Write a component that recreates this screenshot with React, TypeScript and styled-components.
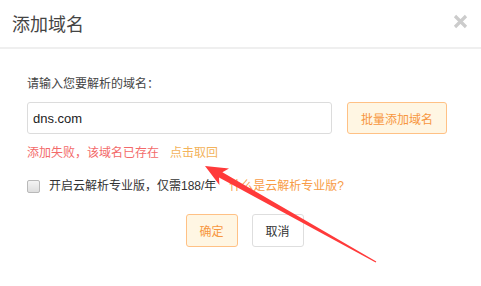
import React, { FC } from "react";
import styled, { createGlobalStyle, css } from "styled-components";

const GlobalStyle = createGlobalStyle`
  html, body {
    margin: 0;
    padding: 0;
    background: #fff;
  }
  body {
    font-family: "Liberation Sans", "Noto Sans CJK SC", sans-serif;
    color: #333;
  }
`;

const Dialog = styled.div`
  position: relative;
  width: 481px;
  height: 286px;
  background: #fff;
  overflow: hidden;
`;

const Header = styled.div`
  display: flex;
  align-items: center;
  justify-content: space-between;
  height: 49px;
  padding: 0 13px 0 12px;
  border-bottom: 2px solid #efefef;
  box-sizing: border-box;
`;

const Title = styled.div`
  font-size: 18px;
  color: #444;
  line-height: 24px;
  padding-top: 3px;
`;

const Close = styled.button`
  border: 0;
  background: none;
  padding: 0;
  width: 15px;
  height: 15px;
  display: flex;
  cursor: pointer;
  margin-top: -5px;
`;

const Body = styled.div`
  padding: 26px 27px 0 27px;
  font-size: 12px;
`;

const FieldLabel = styled.div`
  line-height: 18px;
  color: #444;
  margin-bottom: 9px;
`;

const InputRow = styled.div`
  display: flex;
  gap: 15px;
`;

const DomainInput = styled.input`
  width: 305px;
  height: 32px;
  box-sizing: border-box;
  border: 1px solid #dcdcdc;
  border-radius: 3px;
  padding: 0 5px;
  font-family: "Liberation Sans", "Noto Sans CJK SC", sans-serif;
  font-size: 13px;
  color: #222;
  outline: none;
`;

interface ButtonProps {
  readonly variant?: "primary" | "default";
}

const Button = styled.button<ButtonProps>`
  height: 33px;
  box-sizing: border-box;
  border-radius: 3px;
  font-family: "Liberation Sans", "Noto Sans CJK SC", sans-serif;
  font-size: 12px;
  cursor: pointer;
  ${(props) =>
    props.variant === "primary"
      ? css`
          background: #fff6e3;
          border: 1px solid #ffc185;
          color: #f7963f;
        `
      : css`
          background: #fff;
          border: 1px solid #dedede;
          color: #333;
        `}
`;

const BatchButton = styled(Button)`
  height: 32px;
  padding: 0 13px;
`;

const ErrorRow = styled.div`
  display: flex;
  gap: 11px;
  margin-top: 10px;
  line-height: 18px;
`;

const ErrorText = styled.span`
  color: #f36a6a;
`;

interface LinkProps {
  readonly tone?: "light" | "strong";
}

const Link = styled.a<LinkProps>`
  color: ${(props) => (props.tone === "light" ? "#f3b35c" : "#f89c47")};
  text-decoration: none;
  cursor: pointer;
`;

const CheckRow = styled.label`
  display: flex;
  align-items: center;
  margin-top: 15px;
  line-height: 18px;
  color: #333;
`;

const CheckBox = styled.span`
  width: 11px;
  height: 11px;
  margin: 0 9px 0 0;
  border: 1px solid #b9b9b9;
  border-radius: 2px;
  background: linear-gradient(#f4f4f4, #dedede);
`;

const CheckLink = styled(Link)`
  margin-left: 13px;
`;

const Footer = styled.div`
  display: flex;
  justify-content: center;
  gap: 14px;
  margin-top: 19px;
  padding-left: 8px;
`;

const FooterButton = styled(Button)`
  width: 52px;
`;

const ArrowLayer = styled.svg`
  position: absolute;
  left: 0;
  top: 0;
  pointer-events: none;
`;

const CloseIcon: FC = () => (
  <svg width="15" height="15" viewBox="0 0 15 15">
    <path d="M2 2 L13 13 M13 2 L2 13" stroke="#cccccc" strokeWidth="3.2" strokeLinecap="butt" />
  </svg>
);

const App: FC = () => (
  <>
    <GlobalStyle />
    <Dialog>
      <Header>
        <Title>添加域名</Title>
        <Close aria-label="关闭">
          <CloseIcon />
        </Close>
      </Header>
      <Body>
        <FieldLabel>请输入您要解析的域名：</FieldLabel>
        <InputRow>
          <DomainInput defaultValue="dns.com" />
          <BatchButton variant="primary">批量添加域名</BatchButton>
        </InputRow>
        <ErrorRow>
          <ErrorText>添加失败，该域名已存在</ErrorText>
          <Link tone="light">点击取回</Link>
        </ErrorRow>
        <CheckRow>
          <CheckBox />
          开启云解析专业版，仅需188/年
          <CheckLink tone="strong">什么是云解析专业版?</CheckLink>
        </CheckRow>
        <Footer>
          <FooterButton variant="primary">确定</FooterButton>
          <FooterButton>取消</FooterButton>
        </Footer>
      </Body>
      <ArrowLayer width="481" height="286" viewBox="0 0 481 286">
        <polygon
          points="205,166 229,168.6 222.4,172.2 376.3,261.6 375.7,262.4 219,177.6 219.4,185"
          fill="#ff3a3a"
        />
      </ArrowLayer>
    </Dialog>
  </>
);

export default App;
